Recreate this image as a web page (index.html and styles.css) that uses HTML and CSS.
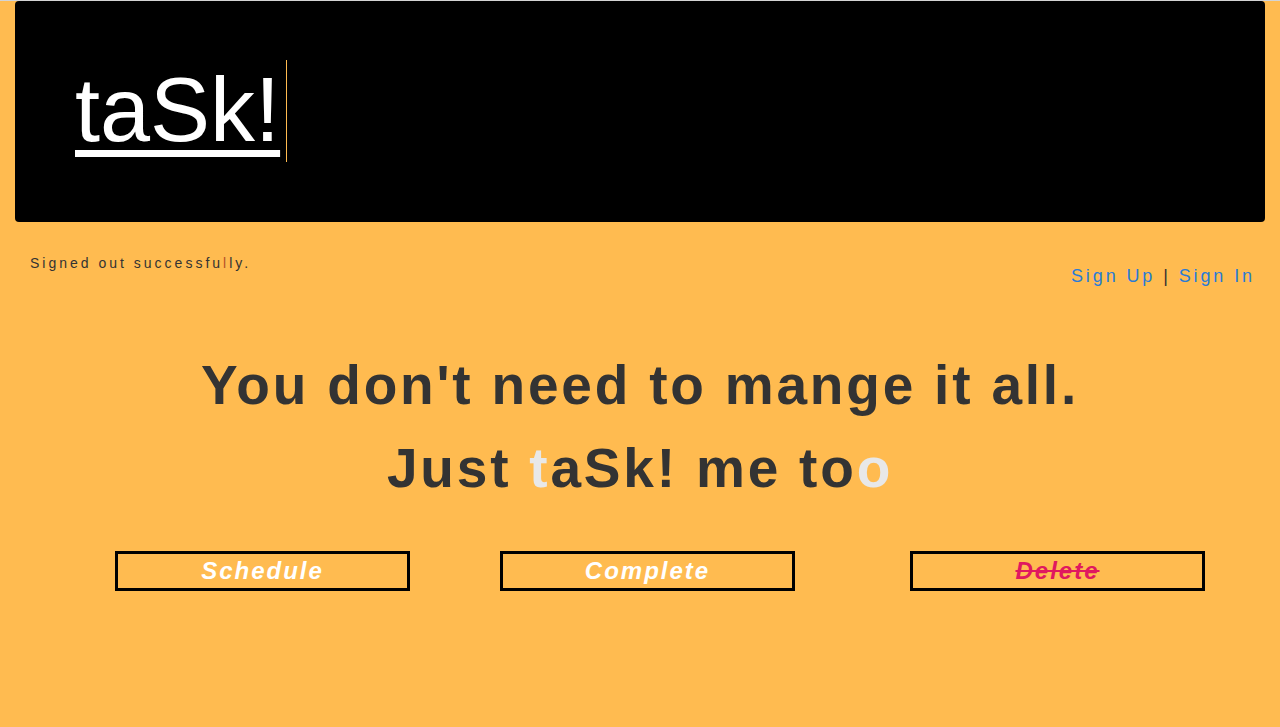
FILE: index.html
```html
<!DOCTYPE html>
<html>
<head>
<meta charset="utf-8">
<link rel="stylesheet" href="styles.css">
</head>
<body>
<div class="topline"></div>
<header class="banner">
  <a class="logo" href="#">taSk!</a><span class="caret"></span>
</header>
<div class="status-row">
  <p class="notice">Signed out successfu<span class="hl">l</span>ly.</p>
  <nav class="auth"><a href="#">Sign Up</a> <span class="sep">|</span> <a href="#">Sign In</a></nav>
</div>
<main class="hero">
  <h1 class="tagline">You don't need to mange it all.<br>Just <span class="light">t</span>aSk! me to<span class="light">o</span></h1>
  <div class="actions">
    <div class="btn btn-schedule">Schedule</div>
    <div class="btn btn-complete">Complete</div>
    <div class="btn btn-delete"><span class="del">Delete</span></div>
  </div>
</main>
</body>
</html>
```
FILE: styles.css
```css
html, body {
  margin: 0;
  padding: 0;
  background: #ffbb50;
  font-family: "Liberation Sans", Arial, sans-serif;
}
.topline {
  height: 1px;
  background: #d4d4d4;
}
.banner {
  margin: 0 15px;
  height: 221px;
  background: #000;
  border-radius: 4px;
  display: flex;
  align-items: flex-start;
  padding-left: 60px;
  box-sizing: border-box;
}
.logo {
  color: #fff;
  font-size: 90px;
  line-height: 1;
  margin-top: 64px;
  text-decoration: underline;
  text-decoration-thickness: 7px;
  text-underline-offset: 9px;
}
.caret {
  width: 1px;
  height: 102px;
  background: #ffbb50;
  margin-top: 59px;
  margin-left: 6px;
}
.status-row {
  display: flex;
  justify-content: space-between;
  padding: 0 25px 0 30px;
}
.notice {
  margin: 33px 0 0;
  font-size: 14px;
  letter-spacing: 3px;
  color: #333;
}
.hl { color: #b8502a; }
.auth {
  margin-top: 44px;
  font-size: 18px;
  letter-spacing: 2.9px;
  color: #333;
}
.auth a {
  color: #2a7bd6;
  text-decoration: none;
}
.hero {
  text-align: center;
}
.tagline {
  margin: 57px 0 0;
  font-size: 55px;
  line-height: 83px;
  font-weight: bold;
  letter-spacing: 2.8px;
  color: #333;
}
.light { color: #e8e8e8; }
.actions {
  display: flex;
  margin-top: 41px;
}
.btn {
  width: 295px;
  height: 40px;
  box-sizing: border-box;
  border: 3px solid #000;
  font-size: 24px;
  font-style: italic;
  font-weight: bold;
  letter-spacing: 2px;
  line-height: 34px;
  color: #fff;
  text-align: center;
}
.btn-schedule { margin-left: 115px; }
.btn-complete { margin-left: 90px; }
.btn-delete { margin-left: 115px; color: #e0185f; }
.del { text-decoration: line-through; }
```
